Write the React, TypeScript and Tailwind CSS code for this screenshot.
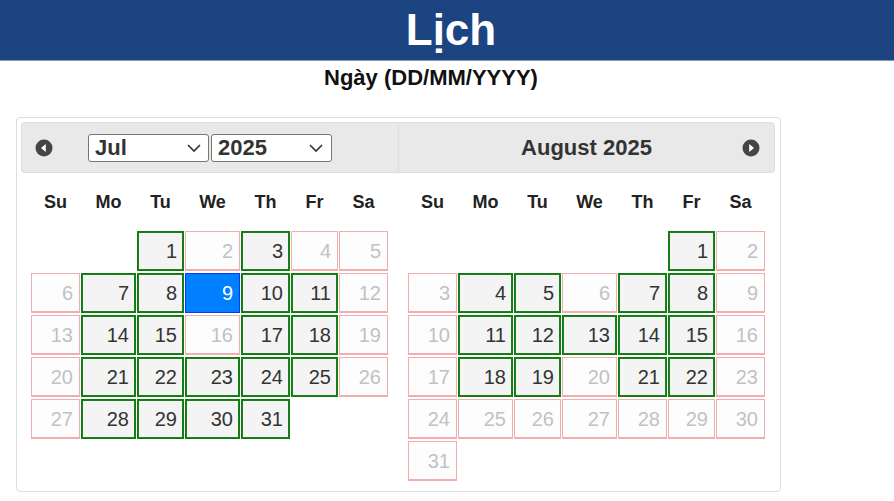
import React from "react";

type Cell = string;

const july: Cell[][] = [
  ["", "", "1a", "2u", "3a", "4u", "5u"],
  ["6u", "7a", "8a", "9s", "10a", "11a", "12u"],
  ["13u", "14a", "15a", "16u", "17a", "18a", "19u"],
  ["20u", "21a", "22a", "23a", "24a", "25a", "26u"],
  ["27u", "28a", "29a", "30a", "31a", "", ""],
];

const august: Cell[][] = [
  ["", "", "", "", "", "1a", "2u"],
  ["3u", "4a", "5a", "6u", "7a", "8a", "9u"],
  ["10u", "11a", "12a", "13a", "14a", "15a", "16u"],
  ["17u", "18a", "19a", "20u", "21a", "22a", "23u"],
  ["24u", "25u", "26u", "27u", "28u", "29u", "30u"],
  ["31u", "", "", "", "", "", ""],
];

const days = ["Su", "Mo", "Tu", "We", "Th", "Fr", "Sa"];

function Chevron() {
  return (
    <svg width="16" height="10" viewBox="0 0 16 10">
      <path d="M2 2 L8 8 L14 2" fill="none" stroke="#333" strokeWidth="1.6" />
    </svg>
  );
}

function CircleIcon({ dir }: { dir: "w" | "e" }) {
  return (
    <svg width="18" height="18" viewBox="0 0 18 18">
      <circle cx="9" cy="9" r="8.5" fill="#454545" />
      {dir === "w" ? (
        <polygon points="10.8,5 10.8,13 6,9" fill="#fff" />
      ) : (
        <polygon points="7.2,5 7.2,13 12,9" fill="#fff" />
      )}
    </svg>
  );
}

function DayCell({ c }: { c: Cell }) {
  if (!c) return <div />;
  const n = c.slice(0, -1);
  const t = c.slice(-1);
  if (t === "s")
    return (
      <div className="border border-[#003eff] bg-[#007fff] text-white flex items-center justify-end pr-[6px] text-[20px]">
        {n}
      </div>
    );
  if (t === "a")
    return (
      <div className="border border-[#117a11] bg-[#f4f4f4] text-[#333333] flex items-center justify-end pr-[6px] text-[20px] shadow-[inset_0_0_0_1px_#1b7f1b]">
        {n}
      </div>
    );
  return (
    <div className="border border-b-2 border-[#f0aeae] bg-[#fdfdfd] text-[#c2c2c2] flex items-center justify-end pr-[6px] text-[20px]">
      {n}
    </div>
  );
}

function Grid({ rows }: { rows: Cell[][] }) {
  return (
    <div className="px-[10px]">
      <div className="h-[58px] grid grid-cols-[49px_55px_47px_55px_49px_47px_49px] gap-x-px items-center">
        {days.map((d) => (
          <div key={d} className="text-center font-bold text-[18px] text-[#222]">
            {d}
          </div>
        ))}
      </div>
      <div className="grid grid-cols-[49px_55px_47px_55px_49px_47px_49px] gap-x-px gap-y-[2px] auto-rows-[40px]">
        {rows.flat().map((c, i) => (
          <DayCell key={i} c={c} />
        ))}
      </div>
    </div>
  );
}

export default function App() {
  return (
    <div
      className="w-[894px] h-[501px] bg-white overflow-hidden"
      style={{ fontFamily: '"Liberation Sans", Arial, sans-serif' }}
    >
      <div className="h-[61px] bg-[#1b4480] border-b border-[#8a98ad] flex items-center justify-center pl-[8px]">
        <span className="text-white font-bold text-[44px] leading-none">Lịch</span>
      </div>
      <div className="h-[32px] flex items-center justify-center pr-[32px] text-[22px] font-bold text-[#111]">
        Ngày (DD/MM/YYYY)
      </div>
      <div className="ml-[16px] mt-[24px] w-[765px] border border-[#dddddd] rounded-[4px] p-[4px] flex">
        <div className="w-[377px]">
          <div className="h-[51px] bg-[#e9e9e9] border border-r-0 border-[#dddddd] rounded-l-[4px] flex items-center pl-[13px]">
            <CircleIcon dir="w" />
            <div className="ml-[35px] flex gap-[2px]">
              <div className="w-[121px] h-[28px] bg-white border border-[#767676] rounded-[3px] flex items-center justify-between pl-[6px] pr-[6px]">
                <span className="text-[22px] font-bold text-[#333] leading-none">Jul</span>
                <Chevron />
              </div>
              <div className="w-[121px] h-[28px] bg-white border border-[#767676] rounded-[3px] flex items-center justify-between pl-[6px] pr-[7px]">
                <span className="text-[22px] font-bold text-[#333] leading-none">2025</span>
                <Chevron />
              </div>
            </div>
          </div>
          <Grid rows={july} />
        </div>
        <div className="w-[377px] pb-[6px]">
          <div className="h-[51px] bg-[#e9e9e9] border border-[#dddddd] rounded-r-[4px] flex items-center justify-between px-[14px]">
            <div className="w-[18px]" />
            <span className="text-[22px] font-bold text-[#333]">August 2025</span>
            <CircleIcon dir="e" />
          </div>
          <Grid rows={august} />
        </div>
      </div>
    </div>
  );
}
